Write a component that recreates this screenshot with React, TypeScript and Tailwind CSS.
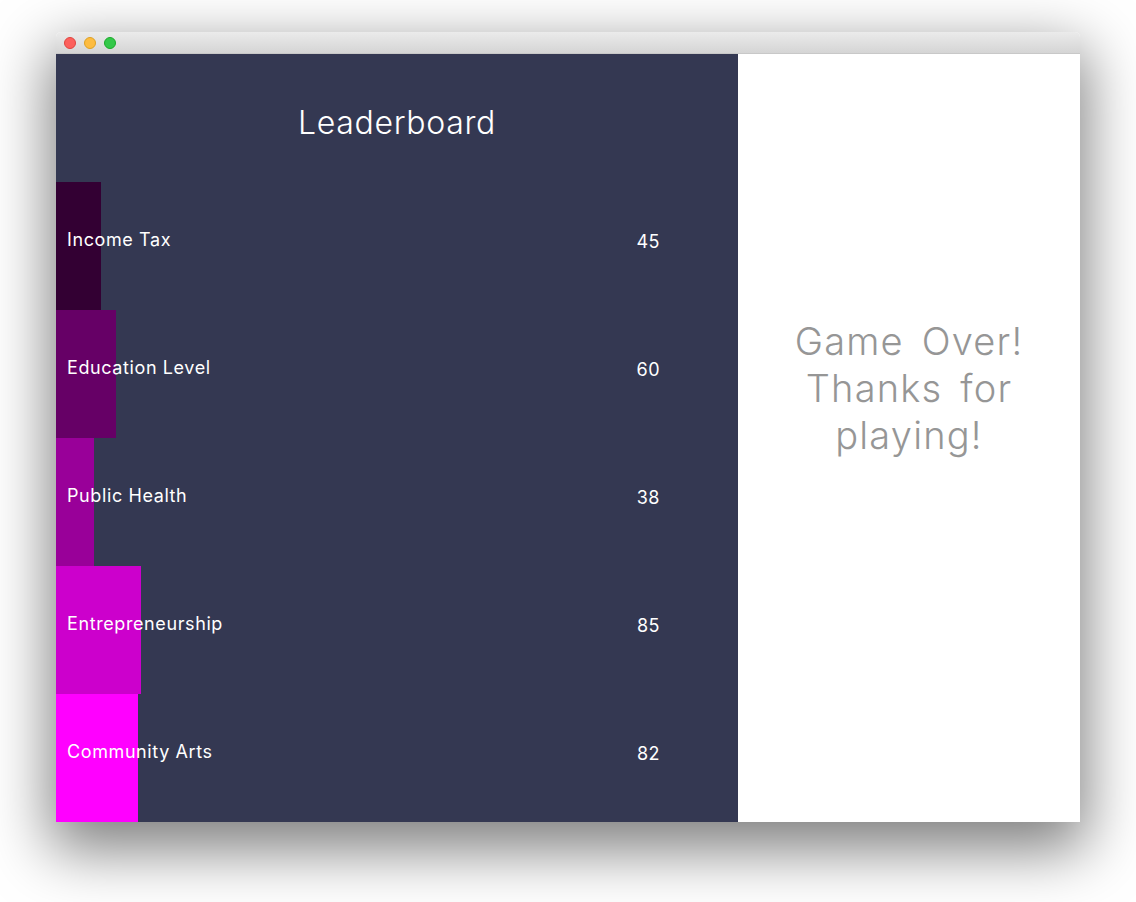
const rows = [
  { name: 'Income Tax', score: 45, color: 'bg-[#330033]' },
  { name: 'Education Level', score: 60, color: 'bg-[#660066]' },
  { name: 'Public Health', score: 38, color: 'bg-[#990099]' },
  { name: 'Entrepreneurship', score: 85, color: 'bg-[#cc00cc]' },
  { name: 'Community Arts', score: 82, color: 'bg-[#ff00ff]' },
]

function TitleBar() {
  return (
    <div className="h-[22px] flex items-center gap-[8px] pl-[8px] bg-gradient-to-b from-[#ebebeb] to-[#d5d5d5] border-b border-[#c8c8c8] rounded-t-[5px]">
      <span className="w-[12px] h-[12px] rounded-full bg-[#fc605c] border border-[#e0443e]" />
      <span className="w-[12px] h-[12px] rounded-full bg-[#fdbc40] border border-[#dea123]" />
      <span className="w-[12px] h-[12px] rounded-full bg-[#34c84a] border border-[#1aab29]" />
    </div>
  )
}

export default function App() {
  return (
    <div
      className="w-[1136px] h-[902px] bg-white pt-[32px] pl-[56px]"
      style={{ fontFamily: 'Inter, Lato, sans-serif' }}
    >
      <div className="w-[1024px] rounded-[5px] shadow-[0_22px_60px_6px_rgba(0,0,0,0.5)] bg-white">
        <TitleBar />
        <div className="flex h-[768px]">
          <div className="w-[682px] bg-[#343852] flex flex-col">
            <div className="h-[128px] flex items-center justify-center">
              <h1 className="text-[32px] font-light text-white tracking-[0.7px] mt-[10px]">
                Leaderboard
              </h1>
            </div>
            {rows.map((row) => (
              <div key={row.name} className="relative h-[128px] flex items-center">
                <div
                  className={`absolute left-0 top-0 bottom-0 ${row.color}`}
                  style={{ width: row.score }}
                />
                <span className="relative pl-[11px] text-[18px] text-white tracking-[0.6px] -mt-[14px]">
                  {row.name}
                </span>
                <span className="relative ml-auto mr-[78px] text-[18px] text-white tracking-[0.5px] -mt-[10px]">
                  {row.score}
                </span>
              </div>
            ))}
          </div>
          <div className="flex-1 bg-white flex justify-center pt-[264px]">
            <p className="text-[38px] leading-[47px] font-light text-[#969696] text-center tracking-[1.2px] [word-spacing:6px]">
              Game Over!
              <br />
              Thanks for
              <br />
              playing!
            </p>
          </div>
        </div>
      </div>
    </div>
  )
}
